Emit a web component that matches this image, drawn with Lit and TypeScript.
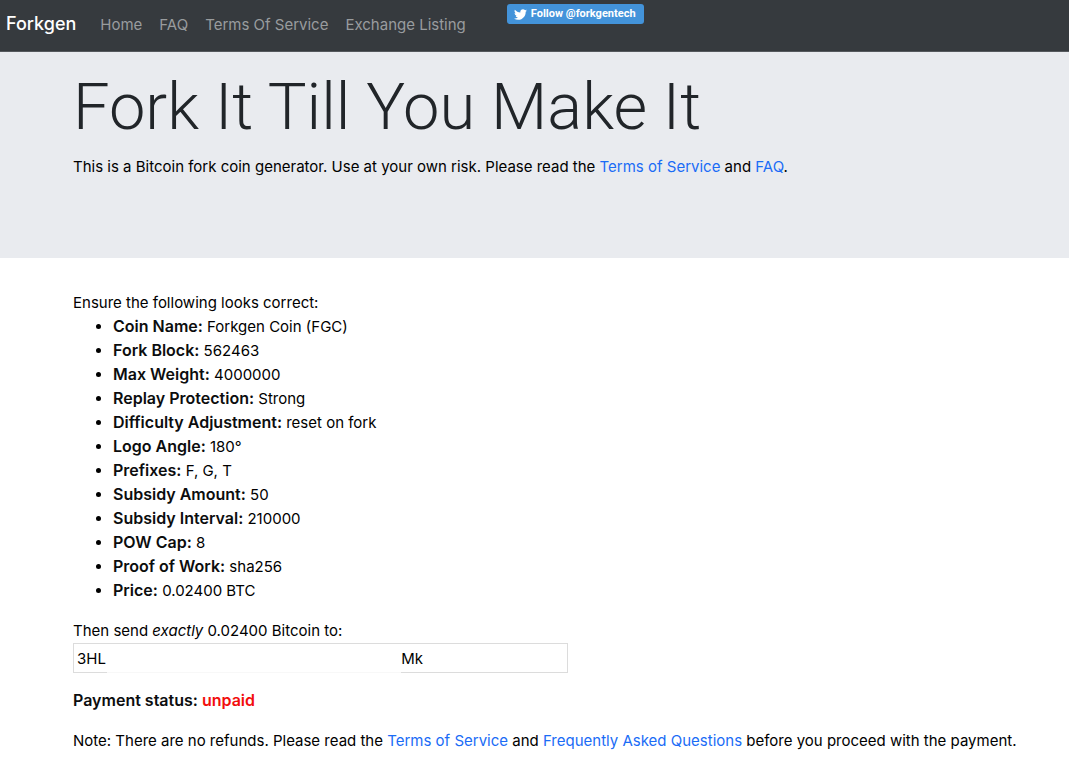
import { LitElement, html, css } from "lit";
import { customElement } from "lit/decorators.js";

const DETAILS: [string, string][] = [
  ["Coin Name", "Forkgen Coin (FGC)"],
  ["Fork Block", "562463"],
  ["Max Weight", "4000000"],
  ["Replay Protection", "Strong"],
  ["Difficulty Adjustment", "reset on fork"],
  ["Logo Angle", "180°"],
  ["Prefixes", "F, G, T"],
  ["Subsidy Amount", "50"],
  ["Subsidy Interval", "210000"],
  ["POW Cap", "8"],
  ["Proof of Work", "sha256"],
  ["Price", "0.02400 BTC"],
];

// The middle of the payment address is blanked out.
const ADDRESS = "3HL" + " ".repeat(70) + "Mk";

@customElement("app-root")
export class AppRoot extends LitElement {
  static styles = css`
    :host {
      display: block;
      min-height: 100vh;
      background: #fff;
      color: #000;
      font: 400 15px/24px Inter, "Liberation Sans", sans-serif;
    }
    * {
      box-sizing: border-box;
    }
    a {
      color: #1a6cf6;
      text-decoration: none;
    }
    p {
      margin: 0 0 16px;
    }
    .navbar {
      display: flex;
      align-items: flex-start;
      height: 52px;
      padding: 0 6px;
      background: #363a3e;
      border-bottom: 1px solid #55595d;
    }
    .brand {
      margin-right: 24px;
      color: #fff;
      font-size: 18px;
      font-weight: 500;
      line-height: 48px;
    }
    .links {
      display: flex;
      gap: 17px;
      margin: 0 41px 0 0;
      padding: 0;
      list-style: none;
      line-height: 50px;
    }
    .links a {
      color: #999c9e;
    }
    .follow {
      display: flex;
      align-items: center;
      gap: 4px;
      height: 20px;
      margin-top: 4px;
      padding: 0 8px 0 7px;
      border-radius: 3px;
      background: #4393da;
      color: #fff;
      font: 700 11px/20px Roboto, "Liberation Sans", sans-serif;
    }
    .bird {
      width: 13px;
      height: 13px;
      fill: #fff;
    }
    .hero {
      padding: 12px 24px 63px 73px;
      background: #e9ebef;
    }
    h1 {
      margin: 0 0 5px;
      color: #212529;
      font-family: Roboto, Inter, sans-serif;
      font-size: 65px;
      font-weight: 300;
      line-height: 86px;
    }
    main {
      padding: 33px 24px 0 73px;
    }
    .intro {
      margin: 0;
    }
    .details {
      margin: 0 0 16px;
      padding-left: 40px;
    }
    b {
      font-size: 16px;
      font-weight: 600;
      line-height: 16px;
      color: #0c0d0e;
    }
    .pay {
      margin-bottom: 16px;
    }
    .pay label {
      display: block;
    }
    .field {
      position: relative;
      width: 495px;
      max-width: 100%;
    }
    .field input {
      display: block;
      width: 100%;
      height: 30px;
      padding: 0 3px;
      border: 1px solid #dcdcdc;
      border-radius: 0;
      background: #fff;
      color: #000;
      font: inherit;
    }
    .mask {
      position: absolute;
      bottom: 0;
      left: 34px;
      width: 294px;
      height: 1px;
      background: #f8f8f8;
    }
    .unpaid {
      color: #f20d0d;
    }
  `;

  render() {
    return html`
      <nav class="navbar">
        <a class="brand" href="#">Forkgen</a>
        <ul class="links">
          <li><a href="#">Home</a></li>
          <li><a href="#faq">FAQ</a></li>
          <li><a href="#terms">Terms Of Service</a></li>
          <li><a href="#exchange">Exchange Listing</a></li>
        </ul>
        <a class="follow" href="#follow">
          <svg class="bird" viewBox="0 0 24 24" aria-hidden="true">
            <path
              d="M23.954 4.569a10 10 0 0 1-2.825.775 4.958 4.958 0 0 0 2.163-2.723c-.951.555-2.005.959-3.127 1.184a4.92 4.92 0 0 0-8.384 4.482C7.691 8.094 4.066 6.13 1.64 3.161a4.822 4.822 0 0 0-.666 2.475c0 1.71.87 3.213 2.188 4.096a4.904 4.904 0 0 1-2.228-.616v.061a4.923 4.923 0 0 0 3.946 4.827 4.996 4.996 0 0 1-2.212.085 4.937 4.937 0 0 0 4.604 3.417 9.868 9.868 0 0 1-6.102 2.105c-.39 0-.779-.023-1.17-.067a13.995 13.995 0 0 0 7.557 2.209c9.054 0 13.999-7.496 13.999-13.986 0-.209 0-.42-.015-.63a9.936 9.936 0 0 0 2.46-2.548z"
            />
          </svg>
          <span>Follow @forkgentech</span>
        </a>
      </nav>
      <header class="hero">
        <h1>Fork It Till You Make It</h1>
        <p>
          This is a Bitcoin fork coin generator. Use at your own risk. Please read the
          <a href="#terms">Terms of Service</a> and <a href="#faq">FAQ</a>.
        </p>
      </header>
      <main>
        <p class="intro">Ensure the following looks correct:</p>
        <ul class="details">
          ${DETAILS.map(([name, value]) => html`<li><b>${name}:</b> ${value}</li>`)}
        </ul>
        <div class="pay">
          <label for="address">Then send <i>exactly</i> 0.02400 Bitcoin to:</label>
          <div class="field">
            <input id="address" type="text" readonly .value=${ADDRESS} />
            <span class="mask"></span>
          </div>
        </div>
        <p><b>Payment status: <span class="unpaid">unpaid</span></b></p>
        <p>
          Note: There are no refunds. Please read the
          <a href="#terms">Terms of Service</a> and
          <a href="#faq">Frequently Asked Questions</a> before you proceed with the payment.
        </p>
      </main>
    `;
  }
}
